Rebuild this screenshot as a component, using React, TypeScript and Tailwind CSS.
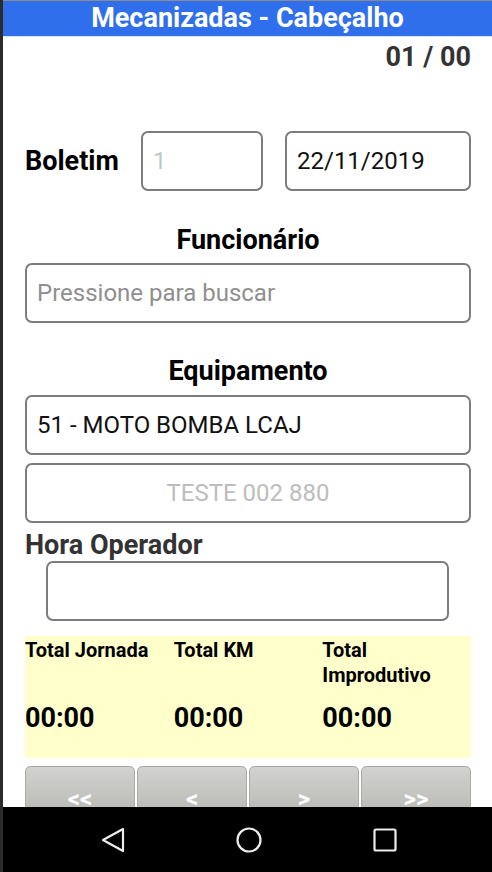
import React from 'react';

const Field: React.FC<{ className?: string; children?: React.ReactNode }> = ({ className = '', children }) => (
  <div className={`h-[60px] border-2 border-[#7c7c7c] rounded-[7px] flex items-center text-[24px] ${className}`}>
    {children}
  </div>
);

const NavBar: React.FC = () => (
  <div className="h-[65px] bg-black flex items-center justify-between pl-[97px] pr-[94px] shrink-0">
    <svg width="26" height="28" viewBox="0 0 26 28" fill="none" stroke="#ececec" strokeWidth={2.2} strokeLinejoin="round">
      <path d="M23 3 L3 14 L23 25 Z" />
    </svg>
    <svg width="28" height="28" viewBox="0 0 28 28" fill="none" stroke="#ececec" strokeWidth={2.2}>
      <circle cx="14" cy="14" r="11.5" />
    </svg>
    <svg width="26" height="26" viewBox="0 0 26 26" fill="none" stroke="#ececec" strokeWidth={2.2}>
      <rect x="2.5" y="2.5" width="21" height="21" rx="1.5" />
    </svg>
  </div>
);

const totals = [
  { label: <>Total Jornada</>, value: '00:00' },
  { label: <>Total KM</>, value: '00:00' },
  { label: <>Total<br />Improdutivo</>, value: '00:00' },
];

const App: React.FC = () => {
  return (
    <div className="w-[492px] h-[872px] flex flex-col bg-white border-l-[3px] border-[#2b2b2b] font-[Roboto,sans-serif] overflow-hidden">
      <div className="h-px bg-[#8c8c8c] shrink-0" />
      <div className="h-[35px] bg-[#2f6fec] text-white font-bold text-[27px] leading-[35px] text-center shrink-0">
        Mecanizadas - Cabeçalho
      </div>
      <div className="h-px bg-[#d6e4fb] shrink-0" />

      <div className="flex-1 pl-[22px] pr-[21px] overflow-hidden">
        <div className="text-right font-bold text-[27px] text-[#333] leading-[30px] mt-[5px]">01 / 00</div>

        <div className="flex items-center mt-[59px]">
          <div className="w-[116px] font-bold text-[27px] text-black leading-[30px]">Boletim</div>
          <Field className="w-[122px] pl-[10px] text-[#c4c4c4]">1</Field>
          <Field className="w-[186px] ml-[22px] pl-[10px] text-[#111]">22/11/2019</Field>
        </div>

        <div className="mt-[34px] text-center font-bold text-[27px] leading-[30px] text-black">Funcionário</div>
        <Field className="mt-[8px] pl-[10px] text-[#8f8f8f]">Pressione para buscar</Field>

        <div className="mt-[33px] text-center font-bold text-[27px] leading-[30px] text-black">Equipamento</div>
        <Field className="mt-[9px] pl-[10px] text-[#111]">51 - MOTO BOMBA LCAJ</Field>
        <Field className="mt-[8px] justify-center text-[#bdbdbd]">TESTE 002 880</Field>

        <div className="mt-[7px] font-bold text-[27px] leading-[30px] text-[#333]">Hora Operador</div>
        <Field className="mt-[1px] ml-[21px] w-[403px]" />

        <div className="mt-[15px] h-[122px] bg-[#ffffcc] grid grid-cols-3 pt-[2px]">
          {totals.map((t, i) => (
            <div key={i} className="flex flex-col">
              <div className="h-[50px] font-bold text-[20px] leading-[25px] text-black">{t.label}</div>
              <div className="mt-[15px] font-bold text-[27px] leading-[30px] text-black">{t.value}</div>
            </div>
          ))}
        </div>

        <div className="mt-[8px] flex gap-[2px]">
          {['<<', '<', '>', '>>'].map((b) => (
            <div
              key={b}
              className="flex-1 h-[60px] rounded-t-[5px] border border-[#a9a9a6] bg-gradient-to-b from-[#d2d2d0] to-[#b3b3af] text-white font-bold text-[24px] leading-[28px] text-center pt-[18px]"
            >
              {b}
            </div>
          ))}
        </div>
      </div>

      <NavBar />
    </div>
  );
};

export default App;
